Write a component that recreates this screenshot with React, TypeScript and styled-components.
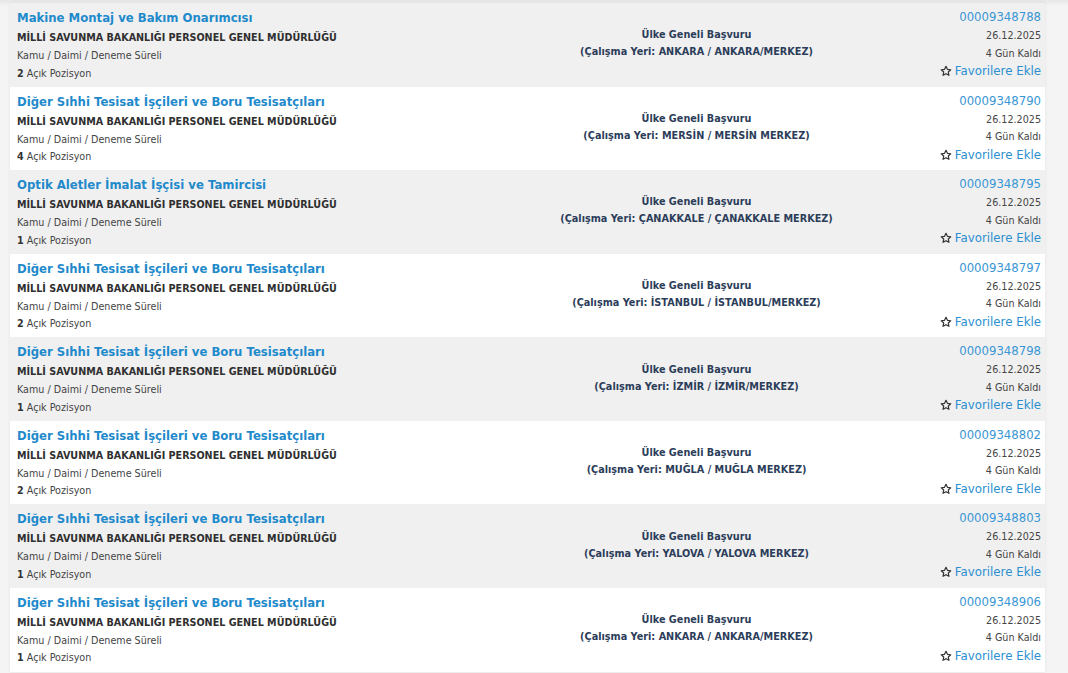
import styled, { createGlobalStyle } from 'styled-components';

type Ilan = {
  title: string;
  count: number;
  city: string;
  id: string;
};

const ORG = 'MİLLİ SAVUNMA BAKANLIĞI PERSONEL GENEL MÜDÜRLÜĞÜ';
const TUBE = 'Diğer Sıhhi Tesisat İşçileri ve Boru Tesisatçıları';

const ilanlar: Ilan[] = [
  { title: 'Makine Montaj ve Bakım Onarımcısı', count: 2, city: 'ANKARA / ANKARA/MERKEZ', id: '00009348788' },
  { title: TUBE, count: 4, city: 'MERSİN / MERSİN MERKEZ', id: '00009348790' },
  { title: 'Optik Aletler İmalat İşçisi ve Tamircisi', count: 1, city: 'ÇANAKKALE / ÇANAKKALE MERKEZ', id: '00009348795' },
  { title: TUBE, count: 2, city: 'İSTANBUL / İSTANBUL/MERKEZ', id: '00009348797' },
  { title: TUBE, count: 1, city: 'İZMİR / İZMİR/MERKEZ', id: '00009348798' },
  { title: TUBE, count: 2, city: 'MUĞLA / MUĞLA MERKEZ', id: '00009348802' },
  { title: TUBE, count: 1, city: 'YALOVA / YALOVA MERKEZ', id: '00009348803' },
  { title: TUBE, count: 1, city: 'ANKARA / ANKARA/MERKEZ', id: '00009348906' },
];

function StarIcon() {
  return (
    <svg width="12" height="12" viewBox="0 0 24 24" fill="none" stroke="#333" strokeWidth="2.4" strokeLinejoin="round">
      <path d="M12 2.5l2.9 6.2 6.6.8-4.9 4.6 1.3 6.6L12 17.4l-5.9 3.3 1.3-6.6-4.9-4.6 6.6-.8z" />
    </svg>
  );
}

function IlanRow({ ilan, striped }: { ilan: Ilan; striped: boolean }) {
  return (
    <Row striped={striped}>
      <LeftCol>
        <Title href="#">{ilan.title}</Title>
        <Org>{ORG}</Org>
        <Small>Kamu / Daimi / Deneme Süreli</Small>
        <Small>
          <b>{ilan.count}</b> Açık Pozisyon
        </Small>
      </LeftCol>
      <MidCol>
        <Loc>Ülke Geneli Başvuru</Loc>
        <Loc>(Çalışma Yeri: {ilan.city})</Loc>
      </MidCol>
      <RightCol>
        <IdLink href="#">{ilan.id}</IdLink>
        <Small>26.12.2025</Small>
        <Small>4 Gün Kaldı</Small>
        <Fav href="#">
          <StarIcon />
          Favorilere Ekle
        </Fav>
      </RightCol>
    </Row>
  );
}

export default function App() {
  return (
    <>
      <GlobalStyle />
      <Page>
        <List>
          {ilanlar.map((ilan, i) => (
            <IlanRow key={ilan.id} ilan={ilan} striped={i % 2 === 0} />
          ))}
        </List>
      </Page>
    </>
  );
}

const GlobalStyle = createGlobalStyle`
  html, body {
    margin: 0;
    padding: 0;
    background: #f4f4f4;
    font-family: "DejaVu Sans", Verdana, sans-serif;
    color: #333;
  }
`;

const Page = styled.div`
  width: 1068px;
  height: 673px;
  overflow: hidden;
  padding: 3px 23px 0 10px;
  box-sizing: border-box;
  background: linear-gradient(#e6e6e6, #f4f4f4 6px);
`;

const List = styled.div`
  display: flex;
  flex-direction: column;
  background: #fff;
  box-shadow: 0 0 3px rgba(0, 0, 0, 0.08);
`;

const Row = styled.div<{ striped: boolean }>`
  display: grid;
  grid-template-columns: 522px 315px 1fr;
  height: 83.57px;
  box-sizing: border-box;
  padding: 5px 4px 0 7px;
  background: ${({ striped }) => (striped ? '#f0f0f0' : '#ffffff')};
`;

const LeftCol = styled.div`
  display: flex;
  flex-direction: column;
`;

const MidCol = styled.div`
  display: flex;
  flex-direction: column;
  align-items: center;
  justify-content: center;
  padding-bottom: 8px;
`;

const RightCol = styled.div`
  display: flex;
  flex-direction: column;
  align-items: flex-end;
  margin-top: -1px;
`;

const Title = styled.a`
  font-size: 11.7px;
  font-weight: bold;
  color: #1f8acb;
  text-decoration: none;
  line-height: 20px;
`;

const Org = styled.div`
  font-size: 9.6px;
  font-weight: bold;
  color: #2f2f2f;
  line-height: 19px;
`;

const Small = styled.div`
  font-size: 9.6px;
  color: #444;
  line-height: 17.5px;

  b {
    color: #333;
  }
`;

const Loc = styled.div`
  font-size: 9.7px;
  font-weight: bold;
  color: #2c3d5a;
  line-height: 17px;
`;

const IdLink = styled.a`
  font-size: 11.7px;
  color: #3a96d4;
  text-decoration: none;
  line-height: 20px;
`;

const Fav = styled.a`
  display: flex;
  align-items: center;
  gap: 3px;
  font-size: 11.8px;
  color: #2b8fd0;
  text-decoration: none;
  line-height: 18px;
`;
